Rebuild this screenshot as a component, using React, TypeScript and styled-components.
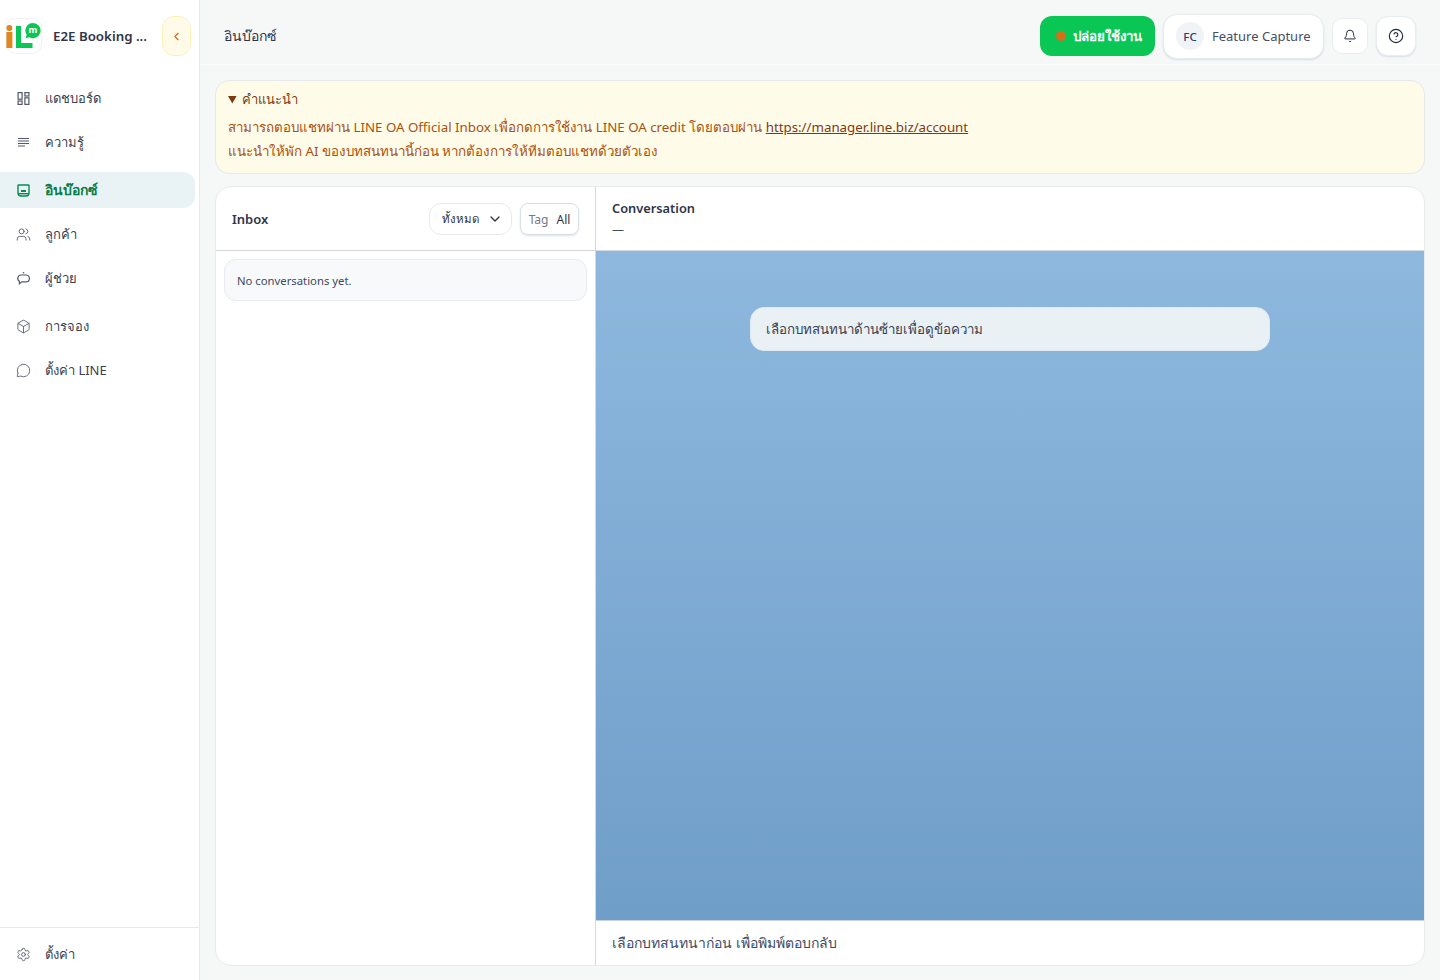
import React from "react";
import styled, { createGlobalStyle } from "styled-components";
import { Bell, Box, ChevronDown, ChevronLeft, CircleHelp, MessageCircle, Settings, Users } from "lucide-react";

const GlobalStyle = createGlobalStyle`
  html, body {
    margin: 0;
    padding: 0;
    height: 100%;
    background: #f6f8f8;
    font-family: "Noto Sans", "Noto Sans CJK SC", sans-serif;
    color: #2b3040;
  }
  #root {
    height: 100%;
  }
  * {
    box-sizing: border-box;
  }
`;

const Shell = styled.div`
  display: flex;
  width: 1440px;
  height: 980px;
  overflow: hidden;
`;

const Sidebar = styled.aside`
  width: 200px;
  flex: none;
  display: flex;
  flex-direction: column;
  background: #ffffff;
  border-right: 1px solid #e6eaed;
`;

const Brand = styled.div`
  height: 72px;
  display: flex;
  align-items: center;
  padding: 0 8px 0 6px;
`;

const BrandName = styled.div`
  flex: 1;
  margin-left: 11px;
  font-size: 13.3px;
  font-weight: 600;
  color: #2f3447;
  white-space: nowrap;
`;

const CollapseButton = styled.button`
  width: 29px;
  height: 40px;
  padding: 0;
  display: flex;
  align-items: center;
  justify-content: center;
  border: 1px solid #fdf1b8;
  border-radius: 12px;
  background: #fffbe8;
  color: #d9620d;
`;

const Nav = styled.nav`
  flex: 1;
  display: flex;
  flex-direction: column;
  gap: 12px;
  padding: 8px 4px 0 0;
`;

const NavGroup = styled.div`
  display: flex;
  flex-direction: column;
  gap: 8px;
`;

const NavItem = styled.a<{ $active?: boolean }>`
  height: 36px;
  display: flex;
  align-items: center;
  gap: 14px;
  padding-left: 16px;
  border-radius: 0 12px 12px 0;
  font-size: ${(p) => (p.$active ? "14px" : "13px")};
  font-weight: ${(p) => (p.$active ? 600 : 400)};
  color: ${(p) => (p.$active ? "#0b7d4a" : "#3a3f52")};
  background: ${(p) => (p.$active ? "#e9f2f5" : "transparent")};
  svg {
    flex: none;
    color: ${(p) => (p.$active ? "#0b8a50" : "#55586a")};
  }
`;

const SidebarFoot = styled.div`
  height: 53px;
  display: flex;
  align-items: center;
  border-top: 1px solid #e6eaed;
  ${NavItem} {
    flex: 1;
  }
`;

const Content = styled.div`
  flex: 1;
  min-width: 0;
  display: flex;
  flex-direction: column;
`;

const TopBar = styled.header`
  height: 65px;
  flex: none;
  display: flex;
  align-items: center;
  gap: 8px;
  padding: 8px 24px 0 24px;
  border-bottom: 1px solid #fbfcfc;
`;

const PageTitle = styled.div`
  flex: 1;
  font-size: 14px;
  color: #2f3447;
`;

const DeployButton = styled.button`
  width: 115px;
  height: 40px;
  display: flex;
  align-items: center;
  justify-content: center;
  gap: 7px;
  padding-right: 3px;
  border: 0;
  border-radius: 12px;
  background: #0ac655;
  color: #ffffff;
  font: 600 13.3px "Noto Sans", sans-serif;
`;

const DeployDot = styled.span`
  width: 10px;
  height: 10px;
  border-radius: 50%;
  background: #d4701c;
`;

const ProfileChip = styled.div`
  width: 161px;
  height: 45px;
  display: flex;
  align-items: center;
  gap: 8px;
  padding-left: 12px;
  background: #ffffff;
  border: 1px solid #e8ecef;
  border-radius: 14px;
  box-shadow: 0 1px 2px #d5dde5;
  font-size: 13px;
  color: #4a4d5e;
`;

const Avatar = styled.span`
  width: 28px;
  height: 28px;
  display: flex;
  align-items: center;
  justify-content: center;
  border-radius: 50%;
  background: #f0f4f6;
  color: #1f3f72;
  font-size: 11.5px;
  font-weight: 500;
`;

const IconButton = styled.button<{ $size: number; $raised?: boolean }>`
  width: ${(p) => p.$size}px;
  height: ${(p) => p.$size}px;
  padding: 0;
  display: flex;
  align-items: center;
  justify-content: center;
  background: #ffffff;
  border: 1px solid #e9edf0;
  border-radius: ${(p) => (p.$raised ? 12 : 10)}px;
  box-shadow: ${(p) => (p.$raised ? "0 1px 2px #d5dde5" : "none")};
  color: #23273a;
`;

const Main = styled.main`
  flex: 1;
  min-height: 0;
  display: flex;
  flex-direction: column;
  gap: 12px;
  padding: 15px 15px 14px 15px;
`;

const Notice = styled.details`
  height: 94px;
  flex: none;
  padding: 9px 12px;
  background: #fffbe9;
  border: 1px solid #e6e9ea;
  border-radius: 14px;
  font-size: 13.3px;
  line-height: 24px;
  color: #a9510c;
`;

const NoticeTitle = styled.summary`
  color: #7c3a12;
  height: 19px;
  line-height: 19px;
  margin-bottom: 6px;
  font-size: 13px;
`;

const NoticeHint = styled.div`
  font-size: 13.35px;
`;

const NoticeLink = styled.a`
  color: #7c3a12;
  text-decoration: underline;
`;

const Card = styled.section`
  flex: 1;
  min-height: 0;
  display: flex;
  background: #ffffff;
  border: 1px solid #e6eaed;
  border-radius: 16px;
  overflow: hidden;
`;

const InboxPane = styled.div`
  width: 380px;
  flex: none;
  border-right: 1px solid #d5d8dc;
`;

const PaneHeader = styled.div`
  height: 64px;
  display: flex;
  align-items: center;
  gap: 8px;
  padding: 0 16px;
  border-bottom: 1px solid #d5d8dc;
`;

const PaneTitle = styled.div`
  flex: 1;
  font-size: 13px;
  font-weight: 600;
  color: #2f3447;
`;

const FilterSelect = styled.div`
  width: 83px;
  height: 32px;
  display: flex;
  align-items: center;
  justify-content: space-between;
  padding: 1px 8px 0 12px;
  border: 1px solid #e6e9ed;
  border-radius: 12px;
  font-size: 11.5px;
  color: #2f3447;
`;

const TagFilter = styled.div`
  width: 59px;
  height: 32px;
  display: flex;
  align-items: center;
  justify-content: center;
  gap: 8px;
  padding-top: 1px;
  border: 1px solid #d9dfe6;
  border-radius: 8px;
  box-shadow: 0 1px 2px #dbe1e8;
  font-size: 12px;
  color: #2f3447;
`;

const TagLabel = styled.span`
  color: #757b8a;
`;

const ConversationList = styled.div`
  padding: 8px;
`;

const EmptyItem = styled.div`
  height: 42px;
  display: flex;
  align-items: center;
  padding: 0 12px;
  background: #f8f9fb;
  border: 1px solid #e8ebef;
  border-radius: 12px;
  font-size: 11.3px;
  color: #3d4a63;
`;

const ChatPane = styled.div`
  flex: 1;
  min-width: 0;
  display: flex;
  flex-direction: column;
`;

const ChatHeader = styled.div`
  height: 64px;
  flex: none;
  padding: 11px 16px 0;
  border-bottom: 1px solid #d5d8dc;
`;

const ChatTitle = styled.div`
  font-size: 12.8px;
  line-height: 20px;
  font-weight: 600;
  color: #2f3447;
`;

const ChatSubtitle = styled.div`
  font-size: 12px;
  line-height: 24px;
  color: #4a4d5e;
`;

const ChatBody = styled.div`
  flex: 1;
  min-height: 0;
  display: flex;
  justify-content: center;
  padding-top: 56px;
  background: linear-gradient(180deg, #8eb8de 0%, #6f9ec9 100%);
`;

const ChatPlaceholder = styled.div`
  width: 520px;
  height: 44px;
  display: flex;
  align-items: center;
  padding: 0 15px;
  background: #e9f1f5;
  border: 1px solid #dfe9f1;
  border-radius: 14px;
  font-size: 13.35px;
  color: #3a3f52;
`;

const ChatFooter = styled.div`
  height: 45px;
  flex: none;
  display: flex;
  align-items: center;
  padding: 0 16px;
  border-top: 1px solid #c5d3e2;
  font-size: 14px;
  color: #3d4a63;
`;

const Logo = () => (
  <svg width="36" height="36" viewBox="0 0 36 36">
    <rect x="0.5" y="0.5" width="35" height="35" rx="9" fill="#fff" stroke="#eef2f4" />
    <circle cx="3.4" cy="10" r="3" fill="#e0851f" />
    <rect x="0.4" y="14" width="6" height="16" fill="#e0851f" />
    <path d="M10 8h5v17h11.5v5H10z" fill="#0ac655" />
    <path d="M27 5a7.6 7.6 0 1 1-3.8 14.2l-3.6 1 1.1-3.4A7.6 7.6 0 0 1 27 5z" fill="#0ac655" />
    <text x="27" y="15.2" textAnchor="middle" fontSize="9" fontWeight="700" fill="#fff" fontFamily="Noto Sans, sans-serif">
      m
    </text>
  </svg>
);

const DashboardIcon = () => (
  <svg width="15" height="15" viewBox="0 0 15 15" fill="none" stroke="currentColor" strokeWidth="1.2">
    <rect x="2.1" y="1.6" width="4" height="6.6" />
    <rect x="2.1" y="10" width="4" height="3.4" />
    <rect x="8.9" y="1.6" width="4" height="3.4" />
    <rect x="8.9" y="6.8" width="4" height="6.6" />
  </svg>
);

const LinesIcon = () => (
  <svg width="15" height="15" viewBox="0 0 15 15" fill="none" stroke="currentColor" strokeWidth="1.2">
    <path d="M2 3.5h11M2 6h11M2 8.5h11M2 11h7" />
  </svg>
);

const InboxIcon = () => (
  <svg width="15" height="15" viewBox="0 0 15 15" fill="none" stroke="currentColor" strokeWidth="1.4">
    <path d="M2.5 2h10a.5.5 0 0 1 .5.5V10a3 3 0 0 1-3 3H5a3 3 0 0 1-3-3V2.5A.5.5 0 0 1 2.5 2z" />
    <path d="M5 8h5" strokeWidth="2" />
    <path d="M2.5 10.7h10" />
  </svg>
);

const AssistantIcon = () => (
  <svg width="15" height="15" viewBox="0 0 15 15" fill="none" stroke="currentColor" strokeWidth="1.2">
    <circle cx="7.5" cy="1.8" r="0.8" fill="currentColor" stroke="none" />
    <path d="M5 4h5a3.4 3.4 0 0 1 0 6.8H5.8L3.4 12.8v-2.5A3.4 3.4 0 0 1 5 4z" />
  </svg>
);

const App: React.FC = () => {
  return (
    <Shell>
      <GlobalStyle />
      <Sidebar>
        <Brand>
          <Logo />
          <BrandName>E2E Booking ...</BrandName>
          <CollapseButton>
            <ChevronLeft size={13} strokeWidth={2} />
          </CollapseButton>
        </Brand>
        <Nav>
          <NavGroup>
            <NavItem>
              <DashboardIcon />
              แดชบอร์ด
            </NavItem>
            <NavItem>
              <LinesIcon />
              ความรู้
            </NavItem>
          </NavGroup>
          <NavGroup>
            <NavItem $active>
              <InboxIcon />
              อินบ๊อกซ์
            </NavItem>
            <NavItem>
              <Users size={15} strokeWidth={1.4} />
              ลูกค้า
            </NavItem>
            <NavItem>
              <AssistantIcon />
              ผู้ช่วย
            </NavItem>
          </NavGroup>
          <NavGroup>
            <NavItem>
              <Box size={15} strokeWidth={1.4} />
              การจอง
            </NavItem>
            <NavItem>
              <MessageCircle size={15} strokeWidth={1.4} />
              ตั้งค่า LINE
            </NavItem>
          </NavGroup>
        </Nav>
        <SidebarFoot>
          <NavItem>
            <Settings size={15} strokeWidth={1.4} />
            ตั้งค่า
          </NavItem>
        </SidebarFoot>
      </Sidebar>
      <Content>
        <TopBar>
          <PageTitle>อินบ๊อกซ์</PageTitle>
          <DeployButton>
            <DeployDot />
            ปล่อยใช้งาน
          </DeployButton>
          <ProfileChip>
            <Avatar>FC</Avatar>
            Feature Capture
          </ProfileChip>
          <IconButton $size={36}>
            <Bell size={14} strokeWidth={1.7} />
          </IconButton>
          <IconButton $size={40} $raised>
            <CircleHelp size={16} strokeWidth={1.7} />
          </IconButton>
        </TopBar>
        <Main>
          <Notice open>
            <NoticeTitle>คำแนะนำ</NoticeTitle>
            <div>
              สามารถตอบแชทผ่าน LINE OA Official Inbox เพื่อกดการใช้งาน LINE OA credit โดยตอบผ่าน{" "}
              <NoticeLink>https://manager.line.biz/account</NoticeLink>
            </div>
            <NoticeHint>แนะนำให้พัก AI ของบทสนทนานี้ก่อน หากต้องการให้ทีมตอบแชทด้วยตัวเอง</NoticeHint>
          </Notice>
          <Card>
            <InboxPane>
              <PaneHeader>
                <PaneTitle>Inbox</PaneTitle>
                <FilterSelect>
                  ทั้งหมด
                  <ChevronDown size={16} strokeWidth={2} />
                </FilterSelect>
                <TagFilter>
                  <TagLabel>Tag</TagLabel>
                  All
                </TagFilter>
              </PaneHeader>
              <ConversationList>
                <EmptyItem>No conversations yet.</EmptyItem>
              </ConversationList>
            </InboxPane>
            <ChatPane>
              <ChatHeader>
                <ChatTitle>Conversation</ChatTitle>
                <ChatSubtitle>—</ChatSubtitle>
              </ChatHeader>
              <ChatBody>
                <ChatPlaceholder>เลือกบทสนทนาด้านซ้ายเพื่อดูข้อความ</ChatPlaceholder>
              </ChatBody>
              <ChatFooter>เลือกบทสนทนาก่อน เพื่อพิมพ์ตอบกลับ</ChatFooter>
            </ChatPane>
          </Card>
        </Main>
      </Content>
    </Shell>
  );
};

export default App;
